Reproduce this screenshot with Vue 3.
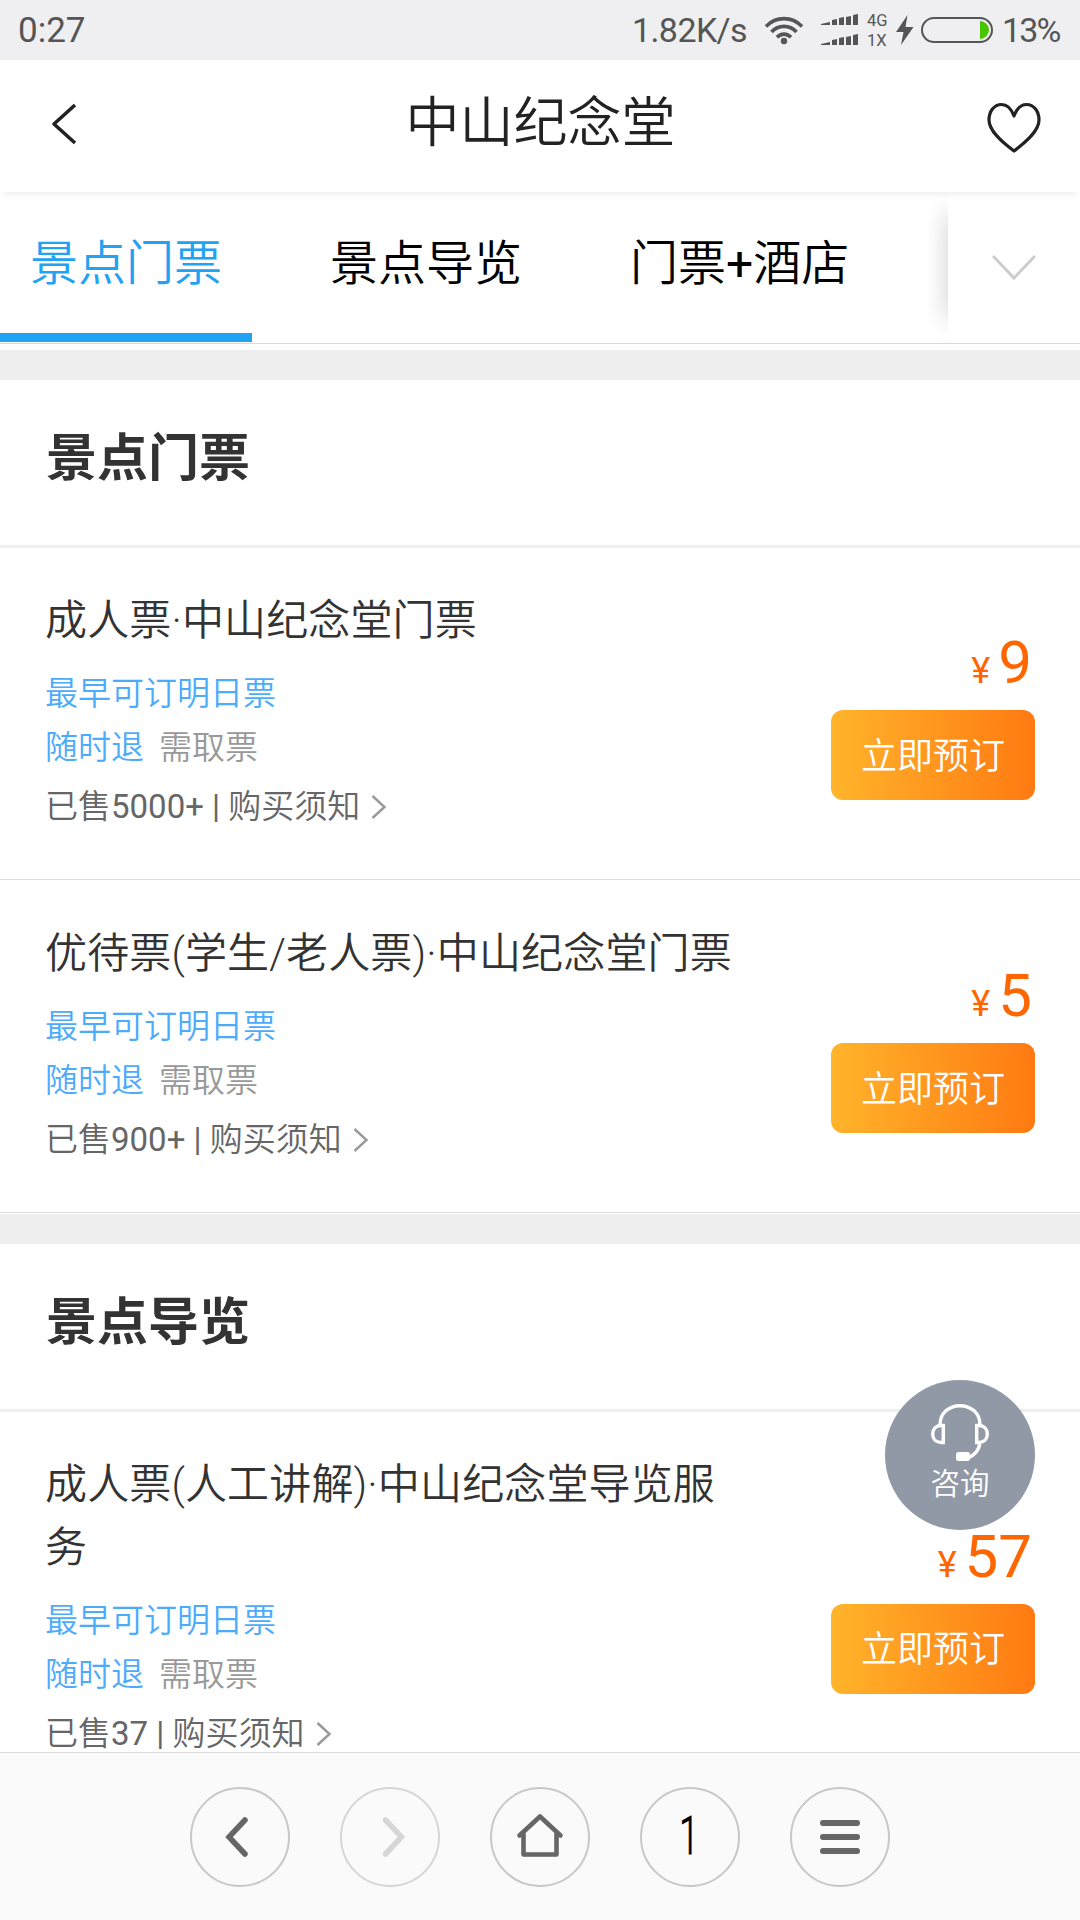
<template>
  <div class="page">
    <div class="status">
      <span class="time">0:27</span>
      <span class="speed">1.82K/s</span>
      <svg class="wifi" width="40" height="30" viewBox="0 0 40 30">
        <g fill="none" stroke="#555" stroke-width="3.6">
          <path d="M2 11.5C12 1 28 1 38 11.5" />
          <path d="M7.500 17C14.500 9.500 25.500 9.500 32.500 17" />
          <path d="M13 22.300C17 18 23 18 27 22.300" />
        </g>
        <circle cx="20" cy="26" r="3.200" fill="#555" />
      </svg>
      <svg class="signal" width="38" height="34" viewBox="0 0 38 34" fill="#555">
        <g v-for="y in [1, 21]" :key="y" :transform="`translate(0 ${y})`">
          <path d="M0 11V10L9 8V11Z" />
          <path d="M11 11V6L16 5V11Z" />
          <path d="M18 11V4L23 3V11Z" />
          <path d="M25 11V3L30 2V11Z" />
          <path d="M32 11V1L37 0V11Z" />
        </g>
      </svg>
      <span class="net"><span>4G</span><span>1X</span></span>
      <svg class="bolt" width="18" height="30" viewBox="0 0 18 30" fill="#555">
        <path d="M11.500 0L0 17H7.500L5 30L17.500 12H9.500Z" />
      </svg>
      <span class="battery"><i></i></span>
      <span class="percent">13%</span>
    </div>

    <header class="header">
      <svg class="back" width="28" height="42" viewBox="0 0 28 42" fill="none" stroke="#222" stroke-width="3.600">
        <path d="M25 2L4 21L25 40" stroke-linejoin="round" />
      </svg>
      <h1>中山纪念堂</h1>
      <svg class="heart" width="56" height="52" viewBox="0 0 56 52" fill="none" stroke="#222" stroke-width="3.200" stroke-linejoin="round">
        <path d="M28 14C25 6 20 2.500 15.500 2.500C8 2.500 3 9.500 3 18C3 29 16 40 28 49C40 40 53 29 53 18C53 9.500 48 2.500 40.500 2.500C36 2.500 31 6 28 14Z" />
      </svg>
    </header>

    <nav class="tabs">
      <div class="tab-list">
        <span v-for="(tab, i) in tabs" :key="tab" class="tab" :class="{ active: i === current }" @click="current = i">
          <span v-for="(part, n) in split(tab)" :key="n" :class="{ latin: n % 2 }">{{ part }}</span>
        </span>
      </div>
      <div class="more">
        <svg width="44" height="28" viewBox="0 0 44 28" fill="none" stroke="#ccc" stroke-width="3">
          <path d="M1 2L22 24L43 2" />
        </svg>
      </div>
    </nav>

    <main class="content">
      <section v-for="group in groups" :key="group.name" class="group">
        <h2>{{ group.name }}</h2>
        <div v-for="item in group.items" :key="item.title" class="item">
          <div class="info">
            <div class="title">{{ item.title }}</div>
            <div class="tags first"><span class="blue">最早可订明日票</span></div>
            <div class="tags"><span class="blue">随时退</span><span>需取票</span></div>
            <div class="sold">
              <div>已售<span class="latin">{{ item.sold }} | </span>购买须知</div>
              <svg width="16" height="26" viewBox="0 0 16 26" fill="none" stroke="#999" stroke-width="2.400">
                <path d="M1.500 2L13.500 13L1.500 24" />
              </svg>
            </div>
          </div>
          <div class="buy">
            <div class="price"><small>¥</small>{{ item.price }}</div>
            <button>立即预订</button>
          </div>
        </div>
      </section>
    </main>

    <div class="consult">
      <svg width="58" height="58" viewBox="0 0 58 58" fill="none" stroke="#fff" stroke-width="3.400">
        <path d="M9 21C9 9 18 1.700 29 1.700S49 9 49 21" />
        <path d="M12.300 21.500V38.500H10C5 38.500 1.700 35 1.700 30S5 21.500 10 21.500Z" />
        <path d="M45.700 21.500V38.500H48C53 38.500 56.300 35 56.300 30S53 21.500 48 21.500Z" />
        <path d="M49 39C48 46 44 51 37 54" />
        <rect x="25" y="48" width="14" height="9" rx="2.500" fill="#fff" stroke="none" />
      </svg>
      <span>咨询</span>
    </div>

    <footer class="toolbar">
      <div class="circle">
        <svg width="50" height="50" viewBox="0 0 50 50" fill="none" stroke="#666" stroke-width="5.500" stroke-linecap="round">
          <path d="M30 8L14 25L30 42" />
        </svg>
      </div>
      <div class="circle disabled">
        <svg width="50" height="50" viewBox="0 0 50 50" fill="none" stroke="#d6d6d6" stroke-width="5.500" stroke-linecap="round">
          <path d="M20.500 8L36.500 25L20.500 42" />
        </svg>
      </div>
      <div class="circle">
        <svg width="50" height="50" viewBox="0 0 50 50" fill="none" stroke="#666" stroke-width="4.600" stroke-linecap="round" stroke-linejoin="round">
          <path d="M4.500 23.500L25 4.500L45.500 23.500" />
          <path d="M8.500 22V42.500H41.500V22" />
        </svg>
      </div>
      <div class="circle count"><span>1</span></div>
      <div class="circle">
        <svg width="40" height="36" viewBox="0 0 40 36" fill="#666">
          <rect y="1" width="40" height="6" rx="3" />
          <rect y="15" width="40" height="6" rx="3" />
          <rect y="29" width="40" height="6" rx="3" />
        </svg>
      </div>
    </footer>
  </div>
</template>

<script setup>
import { ref } from 'vue';

const current = ref(0);
const tabs = ['景点门票', '景点导览', '门票+酒店'];

const groups = [
  {
    name: '景点门票',
    items: [
      { title: '成人票·中山纪念堂门票', sold: '5000+', price: 9 },
      { title: '优待票(学生/老人票)·中山纪念堂门票', sold: '900+', price: 5 },
    ],
  },
  {
    name: '景点导览',
    items: [
      { title: '成人票(人工讲解)·中山纪念堂导览服务', sold: '37', price: 57 },
    ],
  },
];

// odd parts are the plus signs, drawn in the regular weight
const split = (text) => text.split(/(\+)/);
</script>

<style>
body {
  margin: 0;
}
</style>

<style scoped>
.page {
  position: relative;
  display: flex;
  flex-direction: column;
  width: 1080px;
  height: 1920px;
  overflow: hidden;
  background: #fff;
  font-family: Roboto, "Noto Sans CJK SC", sans-serif;
  font-weight: 350;
}

.latin {
  font-weight: 400;
}

.status {
  display: flex;
  flex: none;
  align-items: center;
  box-sizing: border-box;
  height: 60px;
  padding: 0 18px 0 18px;
  background: #efeff1;
  color: #555;
  font-size: 34px;
  font-weight: 400;
}

.time {
  font-size: 35px;
}

.speed {
  margin-left: auto;
  letter-spacing: -0.6px;
}

.wifi {
  margin-left: 17px;
}

.signal {
  margin-left: 17px;
}

.net {
  display: flex;
  flex-direction: column;
  width: 24px;
  margin-left: 8px;
  font-size: 16.5px;
  line-height: 20px;
}

.net span {
  position: relative;
  top: 1px;
}

.bolt {
  margin-left: 5px;
}

.battery {
  display: flex;
  justify-content: flex-end;
  align-items: center;
  box-sizing: border-box;
  width: 72px;
  height: 26px;
  margin-left: 7px;
  padding-right: 2px;
  border: 2px solid #555;
  border-radius: 13px;
}

.battery i {
  width: 9px;
  height: 18px;
  border-radius: 0 9px 9px 0;
  background: #48c400;
}

.percent {
  width: 60px;
  margin-left: 9px;
  letter-spacing: -1.8px;
}

.header {
  position: relative;
  z-index: 1;
  display: flex;
  flex: none;
  align-items: center;
  justify-content: space-between;
  box-sizing: border-box;
  height: 132px;
  padding: 0 38px 4px 50px;
  box-shadow: 0 6px 6px -4px rgba(0, 0, 0, 0.08);
  color: #222;
}

h1 {
  margin: 0 0 11px 17px;
  font-size: 54px;
  font-weight: 350;
}

.heart {
  margin-top: 8px;
}

.tabs {
  display: flex;
  flex: none;
  height: 151px;
  border-bottom: 1px solid #d9d9d9;
  margin-bottom: 6px;
  overflow: hidden;
}

.tab-list {
  display: flex;
  flex: 1;
  gap: 48px;
}

.tab {
  height: 141px;
  padding: 0 30px;
  border-bottom: 9px solid transparent;
  color: #000;
  font-size: 48px;
  line-height: 143px;
  white-space: nowrap;
}

.tab.active {
  border-color: #21a2f2;
  color: #21a2f2;
}

.more {
  position: relative;
  display: flex;
  align-items: center;
  justify-content: center;
  width: 132px;
  background: #fff;
}

/* soft edge on the left of the dropdown arrow */
.more::before {
  content: "";
  position: absolute;
  left: 0;
  top: 22px;
  width: 20px;
  height: 104px;
  box-shadow: 0 0 26px rgba(0, 0, 0, 0.21);
  clip-path: inset(-30px 20px -30px -30px);
}

.content {
  flex: 1;
  overflow: hidden;
}

.group {
  border-top: 30px solid #eee;
}

.group + .group {
  margin-top: 1px;
}

h2 {
  height: 165px;
  margin: 0;
  padding: 0 46px;
  border-bottom: 3px solid #eee;
  color: #333;
  font-size: 51px;
  font-weight: 700;
  line-height: 158px;
}

.item {
  display: flex;
  align-items: center;
  justify-content: space-between;
  padding: 41px 45px 45px 45px;
  border-bottom: 1px solid #dcdcdc;
}

.item + .item {
  margin-top: 1px;
}

.info {
  width: 690px;
}

.title {
  color: #333;
  font-size: 42px;
  letter-spacing: 0.14px;
  line-height: 63px;
}

.tags {
  display: flex;
  gap: 15px;
  color: #999;
  font-size: 33px;
  line-height: 54px;
}

.tags.first {
  margin-top: 15px;
}

.blue {
  color: #4dabfc;
}

.sold {
  display: flex;
  align-items: center;
  gap: 11px;
  margin-top: 5px;
  color: #666;
  font-size: 33px;
  line-height: 54px;
}

.buy {
  display: flex;
  flex-direction: column;
  align-items: flex-end;
  margin-top: 4px;
}

.group + .group .buy {
  margin-top: 0;
}

.price {
  height: 83px;
  margin-right: 3px;
  color: #ff6600;
  font-size: 60px;
  font-weight: 400;
  line-height: 72px;
}

.price small {
  margin-right: 8px;
  font-size: 36px;
}

button {
  width: 204px;
  height: 90px;
  padding: 0 0 5px;
  border: none;
  border-radius: 12px;
  background: linear-gradient(90deg, #ffb42b, #ff7a12);
  color: #fff;
  font: inherit;
  font-size: 36px;
}

.consult {
  position: absolute;
  right: 45px;
  top: 1380px;
  display: flex;
  flex-direction: column;
  align-items: center;
  box-sizing: border-box;
  width: 150px;
  height: 150px;
  padding-top: 24px;
  border-radius: 50%;
  background: rgba(133, 142, 156, 0.9);
  color: #fff;
  font-size: 29.5px;
  line-height: 44px;
}

.toolbar {
  display: flex;
  flex: none;
  align-items: center;
  justify-content: center;
  gap: 50px;
  height: 167px;
  border-top: 1px solid #dcdcdc;
  background: #fafafa;
}

.circle {
  display: flex;
  align-items: center;
  justify-content: center;
  box-sizing: border-box;
  width: 100px;
  height: 100px;
  border: 2px solid #c8c8c8;
  border-radius: 50%;
}

.circle.disabled {
  border-color: #d6d6d6;
}

.count {
  color: #000;
  font-size: 54px;
}

.count span {
  margin: 0 2px 2px 0;
  transform: scaleX(0.65);
  -webkit-text-stroke: 1px currentColor;
}
</style>
